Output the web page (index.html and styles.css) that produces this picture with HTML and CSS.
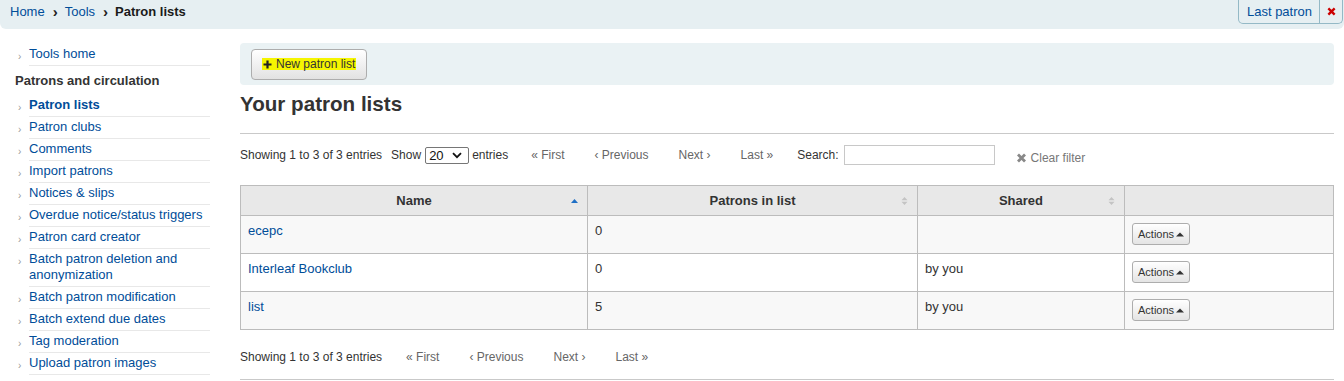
FILE: index.html
```html
<!DOCTYPE html>
<html lang="en">
<head>
    <meta charset="UTF-8">
    <title>Patron lists &rsaquo; Tools</title>
    <link rel="stylesheet" href="styles.css">
</head>
<body>
<!-- Breadcrumbs -->
<nav class="breadcrumbs">
    <ol class="crumbs">
        <li><a href="#">Home</a></li>
        <li class="sep">&rsaquo;</li>
        <li><a href="#">Tools</a></li>
        <li class="sep">&rsaquo;</li>
        <li class="current">Patron lists</li>
    </ol>
    <div class="last-patron">
        <a href="#" class="lp-link">Last patron</a>
        <a href="#" class="lp-clear">
            <svg width="9" height="9" viewBox="0 0 10 10"><path d="M1.5 1.5L8.5 8.5M8.5 1.5L1.5 8.5" stroke="#cc0000" stroke-width="2.6"/></svg>
        </a>
    </div>
</nav>

<div class="page">
    <!-- Sidebar -->
    <aside class="sidebar">
        <ul class="menu">
            <li><span class="arrow">&rsaquo;</span><a href="#">Tools home</a></li>
        </ul>
        <h5 class="menu-title">Patrons and circulation</h5>
        <ul class="menu">
            <li class="active"><span class="arrow">&rsaquo;</span><a href="#">Patron lists</a></li>
            <li><span class="arrow">&rsaquo;</span><a href="#">Patron clubs</a></li>
            <li><span class="arrow">&rsaquo;</span><a href="#">Comments</a></li>
            <li><span class="arrow">&rsaquo;</span><a href="#">Import patrons</a></li>
            <li><span class="arrow">&rsaquo;</span><a href="#">Notices &amp; slips</a></li>
            <li><span class="arrow">&rsaquo;</span><a href="#">Overdue notice/status triggers</a></li>
            <li><span class="arrow">&rsaquo;</span><a href="#">Patron card creator</a></li>
            <li><span class="arrow">&rsaquo;</span><a href="#">Batch patron deletion and anonymization</a></li>
            <li><span class="arrow">&rsaquo;</span><a href="#">Batch patron modification</a></li>
            <li><span class="arrow">&rsaquo;</span><a href="#">Batch extend due dates</a></li>
            <li><span class="arrow">&rsaquo;</span><a href="#">Tag moderation</a></li>
            <li><span class="arrow">&rsaquo;</span><a href="#">Upload patron images</a></li>
        </ul>
    </aside>

    <!-- Main content -->
    <main class="content">
        <div class="toolbar">
            <button class="btn">
                <span class="hl">
                    <svg width="9" height="9" viewBox="0 0 9 9"><path d="M4.5 0.5V8.5M0.5 4.5H8.5" stroke="#222" stroke-width="2.2"/></svg>
                    New patron list
                </span>
            </button>
        </div>

        <h1>Your patron lists</h1>

        <div class="table-wrap">
            <div class="dt-top">
                <span class="dt-info">Showing 1 to 3 of 3 entries</span>
                <span class="dt-length">Show
                    <span class="select">20
                        <svg width="10" height="7" viewBox="0 0 10 7"><path d="M1 1.2L5 5.2L9 1.2" stroke="#111" stroke-width="1.8" fill="none"/></svg>
                    </span>
                    entries</span>
                <span class="pager">
                    <a class="pg">&laquo; First</a>
                    <a class="pg">&lsaquo; Previous</a>
                    <a class="pg">Next &rsaquo;</a>
                    <a class="pg">Last &raquo;</a>
                </span>
                <label class="dt-search">Search: <input type="text"></label>
                <a class="clear-filter">
                    <svg width="11" height="10" viewBox="0 0 11 10"><path d="M2 1.5L9 8.5M9 1.5L2 8.5" stroke="#888" stroke-width="2.8"/></svg>
                    Clear filter
                </a>
            </div>

            <table class="lists">
                <thead>
                <tr>
                    <th class="col-name sorted">Name
                        <svg class="sort" width="7" height="5" viewBox="0 0 7 5"><path d="M0 4.5L3.5 0.5L7 4.5Z" fill="#1f6fc5"/></svg>
                    </th>
                    <th class="col-count">Patrons in list
                        <svg class="sort" width="7" height="9" viewBox="0 0 7 9"><path d="M0.5 3.7L3.5 0.5L6.5 3.7Z M0.5 5.3L3.5 8.5L6.5 5.3Z" fill="#c4c4c4"/></svg>
                    </th>
                    <th class="col-shared">Shared
                        <svg class="sort" width="7" height="9" viewBox="0 0 7 9"><path d="M0.5 3.7L3.5 0.5L6.5 3.7Z M0.5 5.3L3.5 8.5L6.5 5.3Z" fill="#c4c4c4"/></svg>
                    </th>
                    <th class="col-actions"></th>
                </tr>
                </thead>
                <tbody>
                <tr class="odd">
                    <td><a href="#">ecepc</a></td>
                    <td>0</td>
                    <td></td>
                    <td><button class="btn-xs">Actions <svg width="8" height="5" viewBox="0 0 8 5"><path d="M0 4.5L4 0.5L8 4.5Z" fill="#333"/></svg></button></td>
                </tr>
                <tr>
                    <td><a href="#">Interleaf Bookclub</a></td>
                    <td>0</td>
                    <td>by you</td>
                    <td><button class="btn-xs">Actions <svg width="8" height="5" viewBox="0 0 8 5"><path d="M0 4.5L4 0.5L8 4.5Z" fill="#333"/></svg></button></td>
                </tr>
                <tr class="odd">
                    <td><a href="#">list</a></td>
                    <td>5</td>
                    <td>by you</td>
                    <td><button class="btn-xs">Actions <svg width="8" height="5" viewBox="0 0 8 5"><path d="M0 4.5L4 0.5L8 4.5Z" fill="#333"/></svg></button></td>
                </tr>
                </tbody>
            </table>

            <div class="dt-bottom">
                <span class="dt-info">Showing 1 to 3 of 3 entries</span>
                <span class="pager">
                    <a class="pg">&laquo; First</a>
                    <a class="pg">&lsaquo; Previous</a>
                    <a class="pg">Next &rsaquo;</a>
                    <a class="pg">Last &raquo;</a>
                </span>
            </div>
        </div>
    </main>
</div>
</body>
</html>
```

FILE: styles.css
```css
/* Global */
* {
    box-sizing: border-box;
}

body {
    margin: 0;
    font-family: "Liberation Sans", Arial, sans-serif;
    font-size: 13px;
    color: #333;
    background-color: #fff;
}

a {
    color: #004d99;
    text-decoration: none;
}

ul, ol {
    list-style: none;
    margin: 0;
    padding: 0;
}

/* Breadcrumbs */
.breadcrumbs {
    display: flex;
    justify-content: space-between;
    height: 29px;
    background-color: #e6eff2;
    border-bottom-left-radius: 6px;
    border-bottom-right-radius: 6px;
}

.crumbs {
    display: flex;
    align-items: flex-start;
    padding: 4px 0 0 10px;
    font-size: 13px;
    line-height: 15px;
}

.crumbs .sep {
    margin: 0 7px 0 8px;
    font-weight: bold;
    font-size: 15px;
    color: #222;
}

.crumbs .current {
    font-weight: bold;
    color: #1a1a1a;
}

.last-patron {
    display: flex;
    height: 24px;
    margin-right: 1px;
    border: 1px solid #94b9c6;
    border-top: none;
    border-radius: 0 0 5px 5px;
}

.lp-link {
    display: flex;
    align-items: center;
    padding: 0 7px 1px 8px;
    font-size: 13px;
}

.lp-clear {
    display: flex;
    align-items: center;
    justify-content: center;
    width: 23px;
    border-left: 1px solid #94b9c6;
}

/* Layout */
.page {
    display: flex;
    padding: 13px 10px 0 15px;
}

/* Sidebar */
.sidebar {
    width: 195px;
    flex-shrink: 0;
    margin-right: 30px;
    padding-top: 2px;
}

.menu li {
    display: flex;
}

.menu .arrow {
    width: 14px;
    flex-shrink: 0;
    padding: 5px 0 0 3px;
    font-size: 10px;
    line-height: 16px;
    color: #999;
}

.menu a {
    flex: 1;
    display: block;
    padding: 2px 0 3px;
    line-height: 16px;
    border-bottom: 1px solid #e8e8e8;
}

.menu .active a {
    font-weight: bold;
}

.menu-title {
    margin: 7px 0 6px;
    font-size: 13px;
    line-height: 16px;
    font-weight: bold;
    color: #333;
}

/* Main content */
.content {
    flex: 1;
    min-width: 0;
}

.toolbar {
    margin-top: 1px;
    padding: 6px 11px 5px;
    background-color: #eaf2f4;
    border-radius: 4px;
}

.btn {
    height: 31px;
    padding: 0 10px;
    font-family: inherit;
    font-size: 12px;
    color: #333;
    background: linear-gradient(#ffffff, #e2e2e2);
    border: 1px solid #adadad;
    border-radius: 4px;
}

.btn .hl {
    display: inline-flex;
    align-items: center;
    gap: 4px;
    padding: 0 1px;
    line-height: 12px;
    background-color: #f5f500;
}

h1 {
    margin: 7px 0 17px;
    font-size: 20.6px;
    line-height: 24px;
    font-weight: bold;
    color: #333;
}

.table-wrap {
    border-top: 1px solid #c9c9c9;
    border-bottom: 1px solid #c9c9c9;
}

/* Table controls */
.dt-top,
.dt-bottom {
    display: flex;
    align-items: center;
    font-size: 12px;
}

.dt-top {
    height: 20px;
    margin: 11px 0 20px;
}

.dt-bottom {
    height: 16px;
    margin: 19px 0 14px;
}

.dt-length {
    display: flex;
    align-items: center;
    margin-left: 9px;
}

.select {
    display: inline-flex;
    align-items: center;
    justify-content: space-between;
    width: 44px;
    height: 17px;
    margin: 0 3px 0 4px;
    padding: 0 6px 0 3px;
    font-size: 13px;
    color: #111;
    border: 1px solid #767676;
    border-radius: 2px;
}

.pager {
    display: flex;
    margin-left: 9px;
}

.dt-bottom .pager {
    margin-left: 10px;
}

.pg {
    padding: 0 15px;
    color: #666;
}

.pg:first-child {
    padding-left: 14px;
}

.dt-search {
    display: flex;
    align-items: center;
    margin-left: 9px;
}

.dt-search input {
    width: 151px;
    height: 20px;
    margin-left: 5px;
    border: 1px solid #c8c8c8;
}

.clear-filter {
    display: flex;
    align-items: center;
    gap: 4px;
    margin: 6px 0 0 21px;
    color: #777;
}

/* Table */
.lists {
    width: 100%;
    border-collapse: collapse;
    border: 1px solid #bcbcbc;
}

.lists th,
.lists td {
    border: 1px solid #bcbcbc;
}

.lists th {
    position: relative;
    height: 30px;
    padding: 0 8px;
    background-color: #e8e8e8;
    font-size: 13px;
    font-weight: bold;
    color: #333;
    text-align: center;
}

.lists .sort {
    position: absolute;
    right: 9px;
    top: 50%;
    transform: translateY(-50%);
}

.col-name { width: 347px; }
.col-count { width: 330px; }
.col-shared { width: 207px; }

.lists td {
    height: 38px;
    padding: 7px 7px 6px;
    vertical-align: top;
    line-height: 15px;
}

.lists tr.odd td {
    background-color: #f8f8f8;
}

.btn-xs {
    display: inline-flex;
    align-items: center;
    gap: 2px;
    height: 22px;
    padding: 0 5px;
    font-family: inherit;
    font-size: 11px;
    color: #333;
    background: linear-gradient(#ffffff, #e4e4e4);
    border: 1px solid #adadad;
    border-radius: 3px;
}
```
